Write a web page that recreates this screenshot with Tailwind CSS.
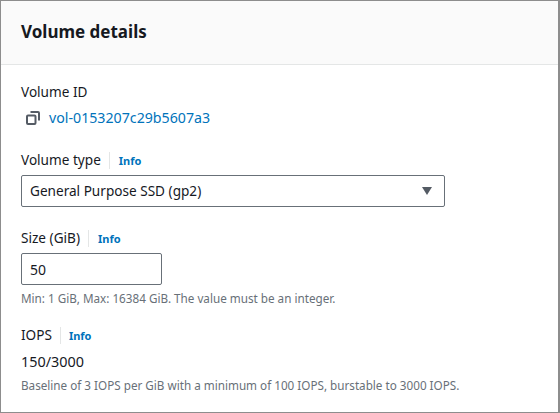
<!DOCTYPE html>
<html lang="en">
<head>
  <meta charset="UTF-8" />
  <script src="https://cdn.jsdelivr.net/npm/@tailwindcss/browser@4"></script>
  <title>Volume details</title>
</head>
<body class="bg-white">
  <div class="w-[560px] h-[413px] overflow-hidden border border-[#8d8d8d] border-r-2 font-['Noto_Sans',sans-serif] text-[#16191f]">

    <div class="h-[64px] bg-[#fafafa] border-b border-[#e4e6e6] pl-5 pt-[18px]">
      <h2 class="text-[17px] leading-[26px] font-bold">Volume details</h2>
    </div>

    <div class="pl-5 pt-[17px]">
      <div class="text-[13.6px] leading-[20px]">Volume ID</div>
      <div class="flex items-center mt-[6px] h-[20px] pl-[5px]">
        <svg class="w-[14px] h-[14px]" viewBox="0 0 14 14" fill="none" stroke="#545b64" stroke-width="2">
          <rect x="1" y="4.5" width="8.5" height="8.5" rx="1" />
          <path d="M4.5 1h7.5a1 1 0 0 1 1 1v7.5" />
        </svg>
        <a class="ml-[9px] text-[14.2px] text-[#0073bb]">vol-0153207c29b5607a3</a>
      </div>

      <div class="flex items-center mt-[22px] h-[20px]">
        <span class="text-[13.6px]">Volume type</span>
        <span class="ml-[8px] h-[17px] border-l border-[#e4e6e6]"></span>
        <a class="ml-[9px] pt-[3px] text-[11px] font-bold text-[#0073bb]">Info</a>
      </div>
      <div class="flex items-center justify-between mt-[5px] w-[424px] h-[32px] border border-[#687078] rounded-[2px] pl-[8px] pr-[12px] text-[13.6px]">
        <span>General Purpose SSD (gp2)</span>
        <svg class="w-[10px] h-[8px]" viewBox="0 0 10 8"><path d="M0 0h10L5 8z" fill="#545b64" /></svg>
      </div>

      <div class="flex items-center mt-[21px] h-[20px]">
        <span class="text-[13.6px]">Size (GiB)</span>
        <span class="ml-[8px] h-[17px] border-l border-[#e4e6e6]"></span>
        <a class="ml-[9px] pt-[3px] text-[11px] font-bold text-[#0073bb]">Info</a>
      </div>
      <div class="flex items-center mt-[5px] w-[141px] h-[32px] border border-[#687078] rounded-[2px] pl-[8px] text-[14px]">50</div>
      <div class="mt-[5px] text-[11.7px] leading-[16px] text-[#687078]">Min: 1 GiB, Max: 16384 GiB. The value must be an integer.</div>

      <div class="flex items-center mt-[19px] h-[20px]">
        <span class="text-[13.6px]">IOPS</span>
        <span class="ml-[8px] h-[17px] border-l border-[#e4e6e6]"></span>
        <a class="ml-[8px] pt-[3px] text-[11px] font-bold text-[#0073bb]">Info</a>
      </div>
      <div class="mt-[7px] text-[14.4px] leading-[20px]">150/3000</div>
      <div class="mt-[5px] text-[11.7px] leading-[16px] text-[#687078]">Baseline of 3 IOPS per GiB with a minimum of 100 IOPS, burstable to 3000 IOPS.</div>
    </div>
  </div>
</body>
</html>
